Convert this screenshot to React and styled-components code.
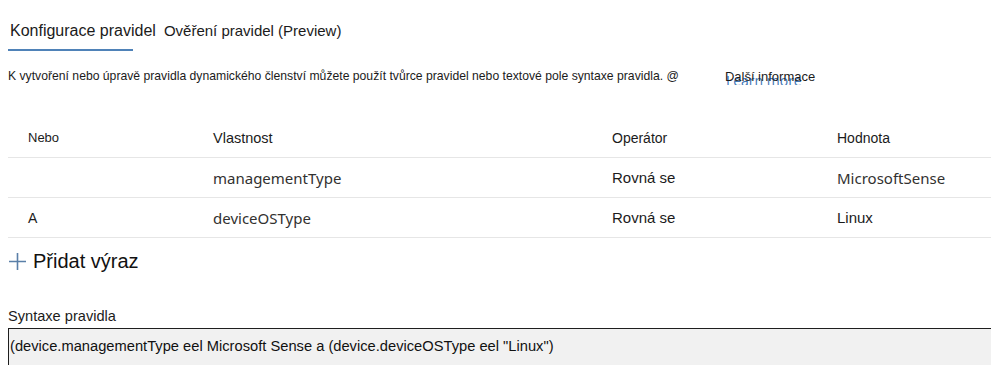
import React from 'react'
import styled, { createGlobalStyle } from 'styled-components'

const GlobalStyle = createGlobalStyle`
  body {
    margin: 0;
    background: #ffffff;
    font-family: "Liberation Sans", Arial, sans-serif;
    color: #1b1b1b;
  }
`

const Page = styled.div`
  width: 991px;
  height: 365px;
  overflow: hidden;
  padding: 0 0 0 8px;
  box-sizing: border-box;
`

const Tabs = styled.div`
  display: flex;
  align-items: flex-start;
  gap: 6px;
  padding-top: 21px;
  height: 30px;
`

const Tab = styled.div`
  font-size: ${(p) => (p.active ? 16 : 15)}px;
  padding-left: 2px;
  color: #1b1b1b;
  white-space: nowrap;
  line-height: 20px;

  &::after {
    content: '';
    display: ${(p) => (p.active ? 'block' : 'none')};
    width: 125px;
    height: 2px;
    margin: 8px 0 0 -2px;
    background: #4f82b8;
  }
`

const Intro = styled.div`
  display: flex;
  align-items: center;
  margin-top: 17px;
  font-size: 12.2px;
  height: 16px;
  white-space: nowrap;
`

const MoreLink = styled.span`
  position: relative;
  margin-left: 46px;
  font-size: 13px;
  color: #1b1b1b;
`

const GhostLink = styled.span`
  position: absolute;
  left: 1px;
  top: 7px;
  height: 9px;
  overflow: hidden;
  display: flex;
  align-items: flex-end;
  color: #3f76b6;
  font-family: "Open Sans", sans-serif;
  font-size: 14px;
  line-height: 9px;
  z-index: -1;
`

const Table = styled.div`
  margin-top: 34px;
  display: grid;
  grid-template-columns: 205px 399px 225px 1fr;
`

const Cell = styled.div`
  height: 40px;
  display: flex;
  align-items: center;
  border-bottom: 1px solid #e6e6e6;
  padding-left: ${(p) => (p.first ? '20px' : '0')};
  font-family: ${(p) =>
    p.alt ? '"Noto Sans", "Open Sans", sans-serif' : '"Liberation Sans", Arial, sans-serif'};
  font-size: ${(p) => p.size || 14}px;
  color: ${(p) => (p.alt ? '#323130' : '#1b1b1b')};
  white-space: nowrap;
  box-sizing: border-box;
`

const AddButton = styled.div`
  display: flex;
  align-items: center;
  gap: 6px;
  margin-top: 12px;
  font-size: 20px;
  color: #111;
`

const Label = styled.div`
  margin-top: 35px;
  font-size: 14.6px;
  color: #1b1b1b;
`

const Syntax = styled.div`
  margin-top: 4px;
  height: 40px;
  background: #f1f1f1;
  border-top: 1px solid #1e1e1e;
  border-left: 1px solid #1e1e1e;
  box-sizing: border-box;
  padding: 9px 0 0 1px;
  font-size: 14.7px;
  color: #111;
  white-space: nowrap;
`

const PlusIcon = () => (
  <svg width="19" height="19" viewBox="0 0 19 19">
    <path d="M9.5 1v17M1 9.5h17" stroke="#5a7fa8" strokeWidth="1.6" fill="none" />
  </svg>
)

const rows = [
  { logic: '', prop: 'managementType', op: 'Rovná se', value: 'MicrosoftSense', altValue: true },
  { logic: 'A', prop: 'deviceOSType', op: 'Rovná se', value: 'Linux', altValue: false },
]

export default function App() {
  return (
    <>
      <GlobalStyle />
      <Page>
        <Tabs>
          <Tab active>Konfigurace pravidel</Tab>
          <Tab>Ověření pravidel (Preview)</Tab>
        </Tabs>
        <Intro>
          K vytvoření nebo úpravě pravidla dynamického členství můžete použít tvůrce pravidel nebo textové pole syntaxe pravidla. @
          <MoreLink>
            Další informace
            <GhostLink>Learn more</GhostLink>
          </MoreLink>
        </Intro>
        <Table>
          <Cell first size={13}>Nebo</Cell>
          <Cell size={14.5}>Vlastnost</Cell>
          <Cell>Operátor</Cell>
          <Cell>Hodnota</Cell>
          {rows.map((r) => (
            <React.Fragment key={r.prop}>
              <Cell first>{r.logic}</Cell>
              <Cell alt size={15}>{r.prop}</Cell>
              <Cell size={15}>{r.op}</Cell>
              <Cell alt={r.altValue} size={15}>{r.value}</Cell>
            </React.Fragment>
          ))}
        </Table>
        <AddButton>
          <PlusIcon />
          Přidat výraz
        </AddButton>
        <Label>Syntaxe pravidla</Label>
        <Syntax>(device.managementType eel Microsoft Sense a (device.deviceOSType eel "Linux")</Syntax>
      </Page>
    </>
  )
}
